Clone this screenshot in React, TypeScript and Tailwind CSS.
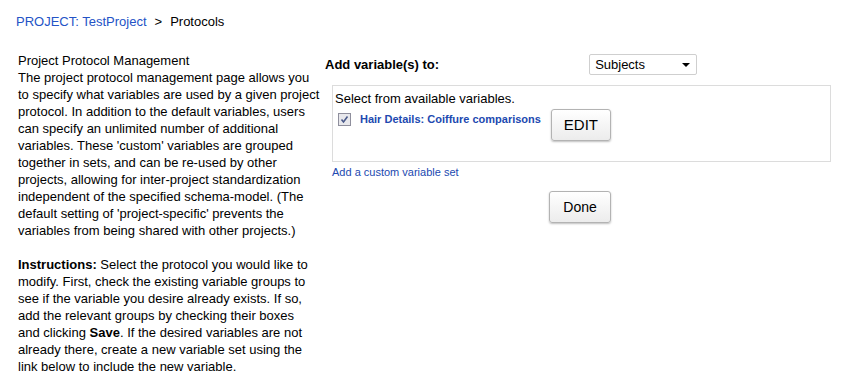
export default function App() {
  return (
    <div className="min-h-[390px] w-[851px] bg-white text-[13px] leading-4 text-black" style={{ fontFamily: '"Liberation Sans", Arial, sans-serif' }}>
      <div className="px-4 pt-[14px] text-[13px]">
        <a className="text-[#2453c6]">PROJECT: TestProject</a>
        <span className="mx-[8px]">&gt;</span>
        <span>Protocols</span>
      </div>

      <div className="mt-[23px] flex">
        <div className="ml-[18px] -mt-[1px] w-[302px] whitespace-nowrap leading-[17px]">
          <p>Project Protocol Management</p>
          <p>
            The project protocol management page allows you<br />
            to specify what variables are used by a given project<br />
            protocol. In addition to the default variables, users<br />
            can specify an unlimited number of additional<br />
            variables. These 'custom' variables are grouped<br />
            together in sets, and can be re-used by other<br />
            projects, allowing for inter-project standardization<br />
            independent of the specified schema-model. (The<br />
            default setting of 'project-specific' prevents the<br />
            variables from being shared with other projects.)
          </p>
          <p className="mt-[17px]">
            <b>Instructions:</b> Select the protocol you would like to<br />
            modify. First, check the existing variable groups to<br />
            see if the variable you desire already exists. If so,<br />
            add the relevant groups by checking their boxes<br />
            and clicking <b>Save</b>. If the desired variables are not<br />
            already there, create a new variable set using the<br />
            link below to include the new variable.
          </p>
        </div>

        <div className="ml-[5px] w-[506px]">
          <div className="mt-[1px] flex items-center">
            <span className="mt-[1px] text-[13px] font-bold">Add variable(s) to:</span>
            <div className="ml-[150px] flex h-[21px] w-[108px] items-center justify-between rounded-[2px] border border-[#cfcfcf] bg-white pl-[5px] pr-[6px]">
              <span>Subjects</span>
              <span className="h-0 w-0 border-x-[4px] border-t-[4px] border-x-transparent border-t-black" />
            </div>
          </div>

          <div className="ml-[7px] mt-[10px] h-[77px] w-[499px] border border-[#dcdcdc] px-[2px] pt-[5px]">
            <p>Select from available variables.</p>
            <div className="mt-[1px] flex items-start">
              <span className="ml-[3px] mt-[5px] flex h-[13px] w-[13px] items-center justify-center border border-[#8f8f9d] bg-[#e8e8ec]">
                <svg width="9" height="9" viewBox="0 0 9 9">
                  <path d="M1.5 4.5 L3.5 7 L7.5 1.5" stroke="#4a5a8a" strokeWidth="1.6" fill="none" />
                </svg>
              </span>
              <span className="ml-[9px] mt-[3px] text-[11px] font-bold text-[#2149b0]">Hair Details: Coiffure comparisons</span>
              <button className="ml-[10px] mt-[1px] h-[32px] w-[60px] rounded-[3px] border border-[#b3b3b3] bg-gradient-to-b from-white to-[#ececec] text-[15px] shadow-[0_1px_2px_rgba(0,0,0,0.25)]">
                EDIT
              </button>
            </div>
          </div>

          <a className="ml-[7px] mt-[2px] block text-[11px] text-[#2149b0]">Add a custom variable set</a>

          <div className="mt-[11px] flex">
            <button className="ml-[224px] h-[32px] w-[62px] rounded-[3px] border border-[#b3b3b3] bg-gradient-to-b from-white to-[#ececec] text-[14px] shadow-[0_1px_2px_rgba(0,0,0,0.25)]">
              Done
            </button>
          </div>
        </div>
      </div>
    </div>
  );
}
